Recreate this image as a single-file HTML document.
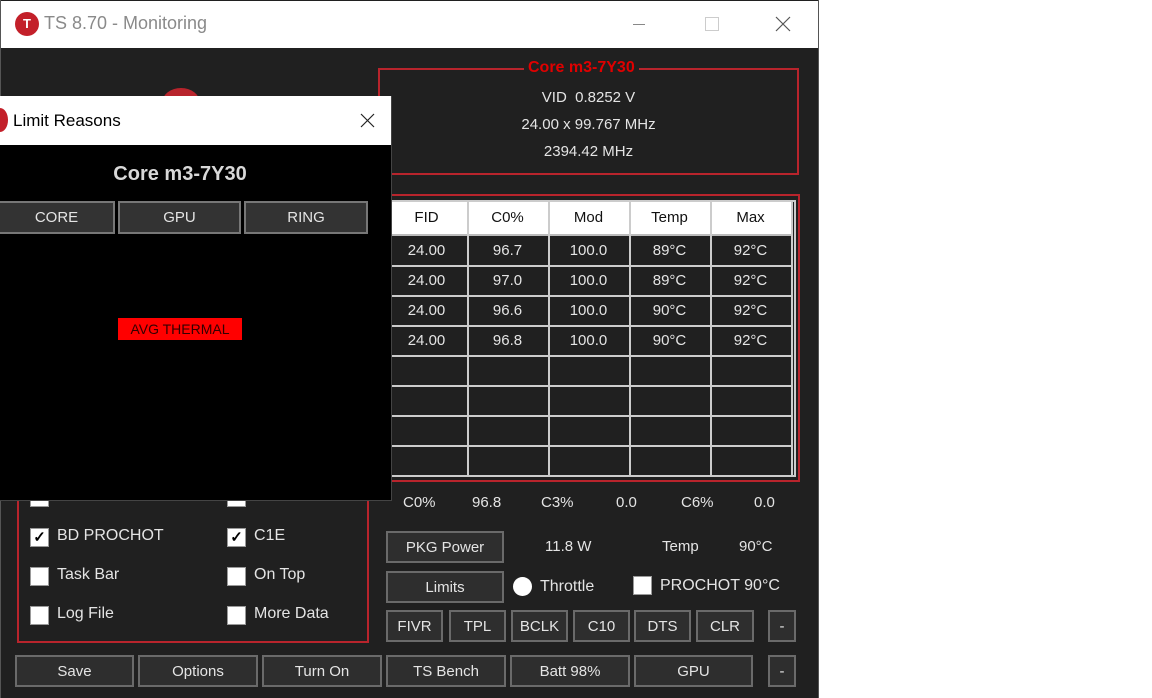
<!DOCTYPE html>
<html><head><meta charset="utf-8"><style>
*{margin:0;padding:0;box-sizing:border-box}
body{width:1152px;height:698px;background:#fff;position:relative;overflow:hidden;font-family:"Liberation Sans",sans-serif;}
.a{position:absolute}
.t{color:#e4e4e4;font-size:15px;position:absolute;white-space:nowrap}
.btn{position:absolute;background:#2e2e2e;border:2px solid #6a6a6a;color:#e4e4e4;font-size:15px;text-align:center;display:flex;align-items:center;justify-content:center}
.cb{position:absolute;width:19px;height:19px;background:#fff;border:1px solid #999;color:#000;font-size:15px;line-height:17px;text-align:center;font-weight:bold}
.cell{position:absolute;color:#e4e4e4;font-size:15px;text-align:center;width:81px}
</style></head><body>
<div class="a" style="left:0;top:0;width:819px;height:698px;background:#202020;border-left:1px solid #555;border-right:1px solid #555"></div>
<div class="a" style="left:1px;top:1px;width:817px;height:47px;background:#fff"></div>
<div class="a" style="left:15px;top:12px;width:24px;height:24px;border-radius:50%;background:#c3202a;color:#fff;font-size:13px;font-weight:bold;text-align:center;line-height:24px">T</div>
<div class="a" style="left:44px;top:13px;font-size:18px;color:#8a8a8a">TS 8.70 - Monitoring</div>
<div class="a" style="left:633px;top:24px;width:12px;height:1px;background:#888"></div>
<div class="a" style="left:705px;top:17px;width:14px;height:14px;border:1px solid #ccc"></div>
<svg class="a" style="left:775px;top:16px" width="16" height="16"><path d="M1 1L15 15M15 1L1 15" stroke="#555" stroke-width="1.2"/></svg>

<div class="a" style="left:378px;top:68px;width:421px;height:107px;border:2px solid #b8242c"></div>
<div class="a" style="left:524px;top:59px;background:#202020;padding:0 4px;color:#e00000;font-weight:bold;font-size:16px">Core m3-7Y30</div>
<div class="t" style="left:378px;width:421px;text-align:center;top:89px">VID&nbsp; 0.8252 V</div>
<div class="t" style="left:378px;width:421px;text-align:center;top:116px">24.00 x 99.767 MHz</div>
<div class="t" style="left:378px;width:421px;text-align:center;top:143px">2394.42 MHz</div>

<div class="a" style="left:378px;top:194px;width:422px;height:288px;border:2px solid #b8242c"></div>
<div class="a" style="left:384px;top:200px;width:412px;height:277px;border:2px solid #ccc;background:#202020"></div>
<div class="a" style="left:386px;top:202px;width:405px;height:32px;background:#fff"></div>
<div class="a" style="left:386px;top:234px;width:405px;height:2px;background:#bbb"></div>
<div id="grid"></div>

<div class="t" style="left:403px;top:494px">C0%</div>
<div class="t" style="left:472px;top:494px">96.8</div>
<div class="t" style="left:541px;top:494px">C3%</div>
<div class="t" style="left:616px;top:494px">0.0</div>
<div class="t" style="left:681px;top:494px">C6%</div>
<div class="t" style="left:754px;top:494px">0.0</div>

<div class="btn" style="left:386px;top:531px;width:118px;height:32px">PKG Power</div>
<div class="t" style="left:545px;top:538px">11.8 W</div>
<div class="t" style="left:662px;top:538px">Temp</div>
<div class="t" style="left:739px;top:538px">90°C</div>
<div class="btn" style="left:386px;top:571px;width:118px;height:32px">Limits</div>
<div class="a" style="left:513px;top:577px;width:19px;height:19px;border-radius:50%;background:#fff"></div>
<div class="t" style="left:540px;top:578px;font-size:16px">Throttle</div>
<div class="cb" style="left:633px;top:576px"></div>
<div class="t" style="left:660px;top:577px;font-size:16px">PROCHOT 90°C</div>

<div class="btn" style="left:386px;top:610px;width:57px;height:32px">FIVR</div>
<div class="btn" style="left:449px;top:610px;width:57px;height:32px">TPL</div>
<div class="btn" style="left:511px;top:610px;width:57px;height:32px">BCLK</div>
<div class="btn" style="left:573px;top:610px;width:57px;height:32px">C10</div>
<div class="btn" style="left:634px;top:610px;width:57px;height:32px">DTS</div>
<div class="btn" style="left:696px;top:610px;width:58px;height:32px">CLR</div>
<div class="btn" style="left:768px;top:610px;width:28px;height:32px">-</div>

<div class="btn" style="left:15px;top:655px;width:119px;height:32px">Save</div>
<div class="btn" style="left:138px;top:655px;width:120px;height:32px">Options</div>
<div class="btn" style="left:262px;top:655px;width:120px;height:32px">Turn On</div>
<div class="btn" style="left:386px;top:655px;width:120px;height:32px">TS Bench</div>
<div class="btn" style="left:510px;top:655px;width:120px;height:32px">Batt 98%</div>
<div class="btn" style="left:634px;top:655px;width:119px;height:32px">GPU</div>
<div class="btn" style="left:768px;top:655px;width:28px;height:32px">-</div>

<div class="a" style="left:17px;top:470px;width:352px;height:173px;border:2px solid #b8242c;border-top:none"></div>
<div class="cb" style="left:30px;top:488px"></div>
<div class="cb" style="left:227px;top:488px">✓</div>
<div class="cb" style="left:30px;top:528px">✓</div><div class="t" style="left:57px;top:527px;font-size:16px">BD PROCHOT</div>
<div class="cb" style="left:227px;top:528px">✓</div><div class="t" style="left:254px;top:527px;font-size:16px">C1E</div>
<div class="cb" style="left:30px;top:567px"></div><div class="t" style="left:57px;top:566px;font-size:16px">Task Bar</div>
<div class="cb" style="left:227px;top:567px"></div><div class="t" style="left:254px;top:566px;font-size:16px">On Top</div>
<div class="cb" style="left:30px;top:606px"></div><div class="t" style="left:57px;top:605px;font-size:16px">Log File</div>
<div class="cb" style="left:227px;top:606px"></div><div class="t" style="left:254px;top:605px;font-size:16px">More Data</div>

<div class="a" style="left:162px;top:88px;width:38px;height:30px;border-radius:50%;background:#b8242c"></div>

<div class="a" style="left:0;top:96px;width:392px;height:405px;background:#000;border-right:1px solid #444;border-bottom:1px solid #444"></div>
<div class="a" style="left:0;top:96px;width:391px;height:49px;background:#fff"></div>
<div class="a" style="left:-8px;top:108px;width:16px;height:24px;border-radius:50%;background:#c3202a"></div>
<div class="a" style="left:13px;top:111px;font-size:17px;color:#000">Limit Reasons</div>
<svg class="a" style="left:360px;top:113px" width="15" height="15"><path d="M1 1L14 14M14 1L1 14" stroke="#222" stroke-width="1.2"/></svg>
<div class="a" style="left:0;width:360px;top:163px;text-align:center;color:#d8d8d8;font-size:20px;font-weight:bold">Core m3-7Y30</div>
<div class="btn" style="left:-2px;top:201px;width:117px;height:33px;border-color:#777;background:#333">CORE</div>
<div class="btn" style="left:118px;top:201px;width:123px;height:33px;border-color:#777;background:#333">GPU</div>
<div class="btn" style="left:244px;top:201px;width:124px;height:33px;border-color:#777;background:#333">RING</div>
<div class="a" style="left:118px;top:318px;width:124px;height:22px;background:#ff0000;color:#300;font-size:14px;text-align:center;line-height:22px">AVG THERMAL</div>

<script>
var g='';var xs=[467,548,629,710,791];
xs.forEach(function(x){g+='<div class="a" style="left:'+x+'px;top:202px;width:2px;height:273px;background:#ccc"></div>';});
[265,295,325,355,385,415,445].forEach(function(y){g+='<div class="a" style="left:386px;top:'+y+'px;width:407px;height:2px;background:#ccc"></div>';});
var cols=[386,467,548,629,710];var hd=['FID','C0%','Mod','Temp','Max'];
hd.forEach(function(h,i){g+='<div class="cell" style="left:'+cols[i]+'px;top:209px;color:#111">'+h+'</div>';});
var rows=[['24.00','96.7','100.0','89°C','92°C'],['24.00','97.0','100.0','89°C','92°C'],['24.00','96.6','100.0','90°C','92°C'],['24.00','96.8','100.0','90°C','92°C']];
rows.forEach(function(r,j){r.forEach(function(c,i){g+='<div class="cell" style="left:'+cols[i]+'px;top:'+(242+30*j)+'px">'+c+'</div>';});});
document.getElementById('grid').innerHTML=g;
</script>
</body></html>
